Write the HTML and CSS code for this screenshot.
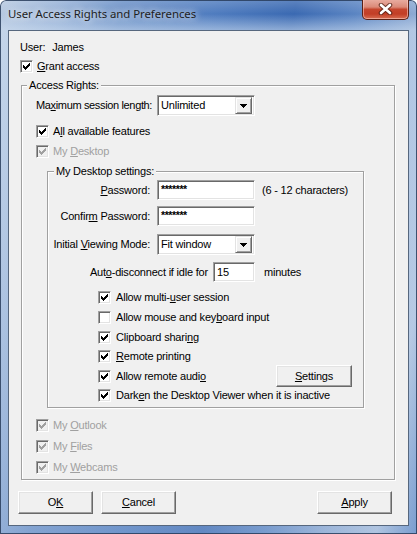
FILE: index.html
```html
<!DOCTYPE html>
<html>
<head>
<meta charset="utf-8">
<title>User Access Rights and Preferences</title>
<link rel="stylesheet" href="styles.css">
</head>
<body>
<div class="window">
  <div class="titlebar">
    <div class="title">User Access Rights and Preferences</div>
    <div class="close">
      <svg width="15" height="12" viewBox="0 0 15 12">
        <path d="M3 2 L12 10 M12 2 L3 10" stroke="#4a1c12" stroke-width="4.6" stroke-linecap="round" fill="none" opacity="0.75"/>
        <path d="M3 2 L12 10 M12 2 L3 10" stroke="#ffffff" stroke-width="2.6" stroke-linecap="round" fill="none"/>
      </svg>
    </div>
  </div>
  <div class="client">
    <div class="row user-row"><span>User:</span><span class="user-name">James</span></div>
    <div class="row check grant">
      <span class="cb"><svg width="7" height="7" viewBox="0 0 7 7"><path d="M0 2h1v3h-1z M1 3h1v3h-1z M2 4h1v3h-1z M3 3h1v3h-1z M4 2h1v3h-1z M5 1h1v3h-1z M6 0h1v3h-1z"/></svg></span>
      <span class="cb-label"><u>G</u>rant access</span>
    </div>

    <div class="group outer">
      <div class="legend">Access Rights:</div>

      <div class="row session">
        <span class="lbl-session">Ma<u>x</u>imum session length:</span>
        <div class="combo">
          <span class="field-text">Unlimited</span>
          <span class="drop"><svg width="7" height="4" viewBox="0 0 7 4"><path d="M0 0h7v1h-1v1h-1v1h-1v1h-1v-1h-1v-1h-1v-1h-1z"/></svg></span>
        </div>
      </div>

      <div class="row check all-feat">
        <span class="cb"><svg width="7" height="7" viewBox="0 0 7 7"><path d="M0 2h1v3h-1z M1 3h1v3h-1z M2 4h1v3h-1z M3 3h1v3h-1z M4 2h1v3h-1z M5 1h1v3h-1z M6 0h1v3h-1z"/></svg></span>
        <span class="cb-label">A<u>l</u>l available features</span>
      </div>

      <div class="row check disabled my-desk">
        <span class="cb"><svg width="7" height="7" viewBox="0 0 7 7"><path d="M0 2h1v3h-1z M1 3h1v3h-1z M2 4h1v3h-1z M3 3h1v3h-1z M4 2h1v3h-1z M5 1h1v3h-1z M6 0h1v3h-1z"/></svg></span>
        <span class="cb-label">My <u>D</u>esktop</span>
      </div>

      <div class="group inner">
        <div class="legend">My Desktop settings:</div>

        <div class="row form-row pw">
          <span class="lbl"><u>P</u>assword:</span>
          <div class="edit w-pw"><span class="field-text stars">*******</span></div>
          <span class="hint">(6 - 12 characters)</span>
        </div>

        <div class="row form-row cpw">
          <span class="lbl">Confir<u>m</u> Password:</span>
          <div class="edit w-pw"><span class="field-text stars">*******</span></div>
        </div>

        <div class="row form-row ivm">
          <span class="lbl">Initial <u>V</u>iewing Mode:</span>
          <div class="combo">
            <span class="field-text">Fit window</span>
            <span class="drop"><svg width="7" height="4" viewBox="0 0 7 4"><path d="M0 0h7v1h-1v1h-1v1h-1v1h-1v-1h-1v-1h-1v-1h-1z"/></svg></span>
          </div>
        </div>

        <div class="row form-row idle">
          <span class="lbl lbl-idle">Aut<u>o</u>-disconnect if idle for</span>
          <div class="edit w-idle"><span class="field-text">15</span></div>
          <span class="minutes">minutes</span>
        </div>

        <div class="opts">
          <div class="opt check">
            <span class="cb"><svg width="7" height="7" viewBox="0 0 7 7"><path d="M0 2h1v3h-1z M1 3h1v3h-1z M2 4h1v3h-1z M3 3h1v3h-1z M4 2h1v3h-1z M5 1h1v3h-1z M6 0h1v3h-1z"/></svg></span>
            <span class="cb-label">Allow multi-<u>u</u>ser session</span>
          </div>
          <div class="opt check">
            <span class="cb off"></span>
            <span class="cb-label">Allow mouse and key<u>b</u>oard input</span>
          </div>
          <div class="opt check">
            <span class="cb"><svg width="7" height="7" viewBox="0 0 7 7"><path d="M0 2h1v3h-1z M1 3h1v3h-1z M2 4h1v3h-1z M3 3h1v3h-1z M4 2h1v3h-1z M5 1h1v3h-1z M6 0h1v3h-1z"/></svg></span>
            <span class="cb-label">Clipboard shari<u>n</u>g</span>
          </div>
          <div class="opt check">
            <span class="cb"><svg width="7" height="7" viewBox="0 0 7 7"><path d="M0 2h1v3h-1z M1 3h1v3h-1z M2 4h1v3h-1z M3 3h1v3h-1z M4 2h1v3h-1z M5 1h1v3h-1z M6 0h1v3h-1z"/></svg></span>
            <span class="cb-label"><u>R</u>emote printing</span>
          </div>
          <div class="opt check">
            <span class="cb"><svg width="7" height="7" viewBox="0 0 7 7"><path d="M0 2h1v3h-1z M1 3h1v3h-1z M2 4h1v3h-1z M3 3h1v3h-1z M4 2h1v3h-1z M5 1h1v3h-1z M6 0h1v3h-1z"/></svg></span>
            <span class="cb-label">Allow remote audi<u>o</u></span>
            <span class="btn settings"><u>S</u>ettings</span>
          </div>
          <div class="opt check">
            <span class="cb"><svg width="7" height="7" viewBox="0 0 7 7"><path d="M0 2h1v3h-1z M1 3h1v3h-1z M2 4h1v3h-1z M3 3h1v3h-1z M4 2h1v3h-1z M5 1h1v3h-1z M6 0h1v3h-1z"/></svg></span>
            <span class="cb-label">Dark<u>e</u>n the Desktop Viewer when it is inactive</span>
          </div>
        </div>
      </div>

      <div class="apps">
        <div class="row check disabled">
          <span class="cb"><svg width="7" height="7" viewBox="0 0 7 7"><path d="M0 2h1v3h-1z M1 3h1v3h-1z M2 4h1v3h-1z M3 3h1v3h-1z M4 2h1v3h-1z M5 1h1v3h-1z M6 0h1v3h-1z"/></svg></span>
          <span class="cb-label">My <u>O</u>utlook</span>
        </div>
        <div class="row check disabled">
          <span class="cb"><svg width="7" height="7" viewBox="0 0 7 7"><path d="M0 2h1v3h-1z M1 3h1v3h-1z M2 4h1v3h-1z M3 3h1v3h-1z M4 2h1v3h-1z M5 1h1v3h-1z M6 0h1v3h-1z"/></svg></span>
          <span class="cb-label">My <u>F</u>iles</span>
        </div>
        <div class="row check disabled">
          <span class="cb"><svg width="7" height="7" viewBox="0 0 7 7"><path d="M0 2h1v3h-1z M1 3h1v3h-1z M2 4h1v3h-1z M3 3h1v3h-1z M4 2h1v3h-1z M5 1h1v3h-1z M6 0h1v3h-1z"/></svg></span>
          <span class="cb-label">My <u>W</u>ebcams</span>
        </div>
      </div>
    </div>

    <div class="buttons">
      <span class="btn">O<u>K</u></span>
      <span class="btn cancel"><u>C</u>ancel</span>
      <span class="btn apply"><u>A</u>pply</span>
    </div>
  </div>
</div>
</body>
</html>
```

FILE: styles.css
```css
* { box-sizing: border-box; }
html, body { margin: 0; padding: 0; }
body {
  width: 417px;
  height: 534px;
  overflow: hidden;
  background: #ffffff;
  font-family: "Liberation Sans", Arial, sans-serif;
  font-size: 11px;
  letter-spacing: -0.2px;
  color: #000;
}
u { text-decoration: underline; text-underline-offset: 1px; }

.window {
  width: 417px;
  height: 534px;
  display: flex;
  flex-direction: column;
  border-radius: 6px 6px 0 0;
  overflow: hidden;
  background:
    linear-gradient(to bottom, rgba(255,255,255,0.18) 0, rgba(255,255,255,0) 14px, rgba(210,225,242,0.55) 30px, rgba(190,208,232,0.3) 100%),
    linear-gradient(100deg, #b7c9e1 0%, #96b1d7 12%, #6a90c7 24%, #4f7cbf 42%, #3a69b2 58%, #5a84c2 70%, #8eaad3 82%, #a9bfdd 92%, #5b86c4 100%);
  box-shadow: inset 0 0 0 1px rgba(40, 60, 90, 0.85);
}

.titlebar {
  height: 30px;
  flex: none;
  display: flex;
  align-items: flex-start;
  padding-left: 8px;
}
.title {
  font-family: "Noto Sans", "Open Sans", sans-serif;
  font-size: 11.4px;
  letter-spacing: -0.05px;
  line-height: 16px;
  padding-top: 6px;
  color: #1e1e1e;
  text-shadow: 0 0 6px rgba(255,255,255,0.9), 0 0 10px rgba(255,255,255,0.7);
}
.close {
  margin-left: auto;
  margin-right: 8px;
  margin-top: -1px;
  width: 47px;
  height: 21px;
  border: 1px solid #5b2116;
  border-top: none;
  border-radius: 0 0 5px 5px;
  background: linear-gradient(to bottom, #eab0a4 0%, #db8a79 40%, #c5452d 52%, #c23e26 75%, #d86f53 100%);
  box-shadow: inset 0 0 0 1px rgba(255, 210, 200, 0.55);
  display: flex;
  align-items: center;
  justify-content: center;
}

.client {
  flex: none;
  width: 401px;
  height: 496px;
  margin: 0 8px;
  border: 1px solid #56677e;
  background: #f0f0f0;
  display: flex;
  flex-direction: column;
}

.row { display: flex; align-items: center; height: 13px; line-height: 13px; white-space: nowrap; }

.user-row { margin: 10px 0 0 11px; }
.user-name { margin-left: 7px; }

.grant { margin: 6px 0 0 11px; }

/* checkboxes */
.cb {
  flex: none;
  width: 13px;
  height: 13px;
  background: #ffffff;
  border: 1px solid;
  border-color: #a0a0a0 #ffffff #ffffff #a0a0a0;
  box-shadow: inset 1px 1px 0 #696969, inset -1px -1px 0 #e3e3e3;
  display: flex;
  align-items: flex-start;
  justify-content: flex-start;
  padding: 2px 0 0 2px;
}
.cb svg { display: block; fill: #000; shape-rendering: crispEdges; }
.cb-label { margin-left: 4px; }
.disabled .cb { background: #f0f0f0; }
.disabled .cb svg { fill: #a0a0a0; }
.disabled .cb-label { color: #a0a0a0; }

/* group boxes */
.group {
  border: 1px solid #a0a0a0;
  box-shadow: inset 1px 1px 0 #ffffff, 1px 1px 0 #ffffff;
  display: flex;
  flex-direction: column;
}
.legend {
  align-self: flex-start;
  height: 13px;
  line-height: 13px;
  margin-top: -7px;
  padding: 0 2px;
  background: #f0f0f0;
  white-space: nowrap;
}
.outer {
  margin: 12px 0 0 12px;
  width: 374px;
  padding: 0 0 5px 14px;
}
.outer > .legend { margin-left: -9px; }

.session { margin-top: 3px; height: 21px; }
.lbl-session { width: 121px; flex: none; letter-spacing: -0.35px; }

/* sunken fields */
.combo, .edit {
  flex: none;
  background: #ffffff;
  border: 1px solid;
  border-color: #a0a0a0 #ffffff #ffffff #a0a0a0;
  box-shadow: inset 1px 1px 0 #696969, inset -1px -1px 0 #e3e3e3;
  display: flex;
  align-items: center;
  padding: 2px;
}
.combo { width: 98px; height: 21px; }
.edit { height: 20px; }
.field-text { flex: 1; padding-left: 1px; line-height: 13px; }
.stars { font-size: 10.5px; font-weight: bold; letter-spacing: -0.4px; line-height: 10px; align-self: flex-start; padding-top: 1px; }
.drop {
  flex: none;
  width: 17px;
  height: 17px;
  background: #f0f0f0;
  border: 1px solid;
  border-color: #e3e3e3 #696969 #696969 #e3e3e3;
  box-shadow: inset 1px 1px 0 #ffffff, inset -1px -1px 0 #a0a0a0;
  display: flex;
  align-items: center;
  justify-content: center;
  padding-top: 1px;
}
.drop svg { display: block; fill: #000; shape-rendering: crispEdges; }

.all-feat { margin-top: 9px; }
.my-desk { margin-top: 7px; }

.inner {
  margin: 13px 0 0 11px;
  width: 317px;
  padding: 0 0 1px 0;
}
.inner > .legend { margin-left: 6px; }

.form-row { height: 20px; }
.lbl { width: 102px; flex: none; text-align: right; margin-right: 7px; white-space: nowrap; }
.w-pw { width: 98px; }
.hint { margin-left: 7px; }
.pw { margin-top: 2px; }
.cpw { margin-top: 6px; }
.ivm { margin-top: 8px; height: 21px; }
.idle { margin-top: 7px; }
.lbl-idle { width: 160px; margin-right: 5px; }
.w-idle { width: 42px; }
.minutes { margin-left: 9px; }

.opts { margin-top: 6.2px; padding-left: 50px; display: flex; flex-direction: column; }
.opt { display: flex; align-items: center; height: 19.6px; line-height: 13px; white-space: nowrap; }
.opt .cb-label { margin-left: 5px; }

/* raised buttons */
.btn {
  flex: none;
  width: 75px;
  height: 23px;
  background: #f0f0f0;
  border: 1px solid;
  border-color: #ffffff #696969 #696969 #ffffff;
  box-shadow: inset -1px -1px 0 #a0a0a0, inset 1px 1px 0 #e3e3e3;
  display: flex;
  align-items: center;
  justify-content: center;
  line-height: 13px;
}
.settings { width: 76px; height: 22px; margin-left: auto; margin-right: 11px; }

.apps { margin-top: 11.5px; display: flex; flex-direction: column; gap: 8px; }

.buttons { display: flex; margin: 11px 16px 0 9px; }
.cancel { margin-left: 8px; }
.apply { margin-left: auto; }
```
